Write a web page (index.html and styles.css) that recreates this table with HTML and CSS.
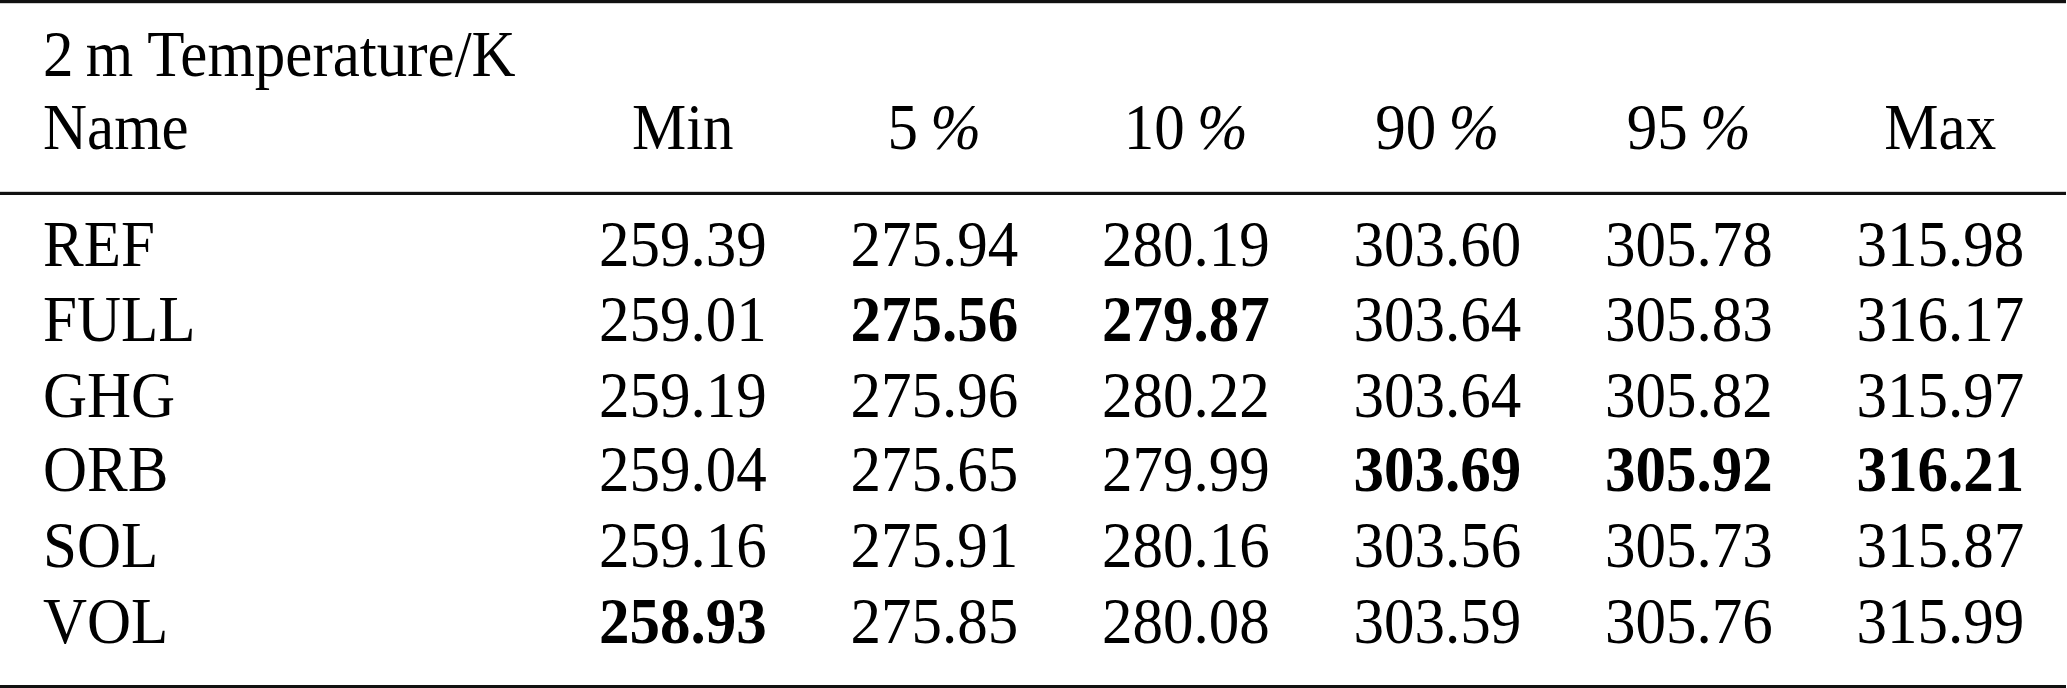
FILE: index.html
```html
<!DOCTYPE html>
<html lang="en">
<head>
    <meta charset="UTF-8">
    <meta name="viewport" content="width=device-width, initial-scale=1.0">
    <title>2 m Temperature</title>
    <link rel="stylesheet" href="styles.css">
</head>
<body>
    <div class="sheet">
        <table class="stats">
            <colgroup>
                <col class="name-col">
                <col span="6" class="num-col">
            </colgroup>
            <thead>
                <tr class="caption-row">
                    <th class="name">2&thinsp;m Temperature/K</th>
                    <th></th><th></th><th></th><th></th><th></th><th></th>
                </tr>
                <tr class="label-row">
                    <th class="name">Name</th>
                    <th>Min</th>
                    <th>5&thinsp;<span class="pct">%</span></th>
                    <th>10&thinsp;<span class="pct">%</span></th>
                    <th>90&thinsp;<span class="pct">%</span></th>
                    <th>95&thinsp;<span class="pct">%</span></th>
                    <th>Max</th>
                </tr>
            </thead>
            <tbody>
                <tr>
                    <td class="name">REF</td>
                    <td>259.39</td><td>275.94</td><td>280.19</td><td>303.60</td><td>305.78</td><td>315.98</td>
                </tr>
                <tr>
                    <td class="name">FULL</td>
                    <td>259.01</td><td class="best">275.56</td><td class="best">279.87</td><td>303.64</td><td>305.83</td><td>316.17</td>
                </tr>
                <tr>
                    <td class="name">GHG</td>
                    <td>259.19</td><td>275.96</td><td>280.22</td><td>303.64</td><td>305.82</td><td>315.97</td>
                </tr>
                <tr>
                    <td class="name">ORB</td>
                    <td>259.04</td><td>275.65</td><td>279.99</td><td class="best">303.69</td><td class="best">305.92</td><td class="best">316.21</td>
                </tr>
                <tr>
                    <td class="name">SOL</td>
                    <td>259.16</td><td>275.91</td><td>280.16</td><td>303.56</td><td>305.73</td><td>315.87</td>
                </tr>
                <tr>
                    <td class="name">VOL</td>
                    <td class="best">258.93</td><td>275.85</td><td>280.08</td><td>303.59</td><td>305.76</td><td>315.99</td>
                </tr>
            </tbody>
        </table>
    </div>
    <div class="bottom-rule"></div>
</body>
</html>
```

FILE: styles.css
```css
body {
    margin: 0;
    height: 688px;
    background: #fff;
    overflow: hidden;
    display: flex;
    flex-direction: column;
    justify-content: space-between;
}
/* glyphs in the source are a bit taller than wide, so stretch vertically */
.sheet {
    width: 2066px;
    transform: scaleY(1.0656);
    transform-origin: left top;
}
.stats {
    width: 2066px;
    table-layout: fixed;
    border-collapse: separate;
    border-spacing: 0;
    border-top: 3px solid #111;
    font-family: "Liberation Serif", "Times New Roman", serif;
    font-size: 61px;
    color: #000;
}
.name-col {
    width: 557px;
}
.num-col {
    width: 251.5px;
}
th, td {
    padding: 0;
    text-align: center;
    white-space: nowrap;
}
th {
    font-weight: normal;
    line-height: 68.5px;
}
td {
    line-height: 70.57px;
}
.name {
    text-align: left;
    padding-left: 43px;
}
.pct {
    font-style: italic;
}
.caption-row th {
    padding-top: 14.4px;
}
.label-row th {
    padding-bottom: 25.8px;
    border-bottom: 3px solid #111;
}
tbody tr:first-child td {
    padding-top: 11.5px;
}
.best {
    font-weight: bold;
}
.bottom-rule {
    width: 2066px;
    border-top: 3px solid #111;
}
```
